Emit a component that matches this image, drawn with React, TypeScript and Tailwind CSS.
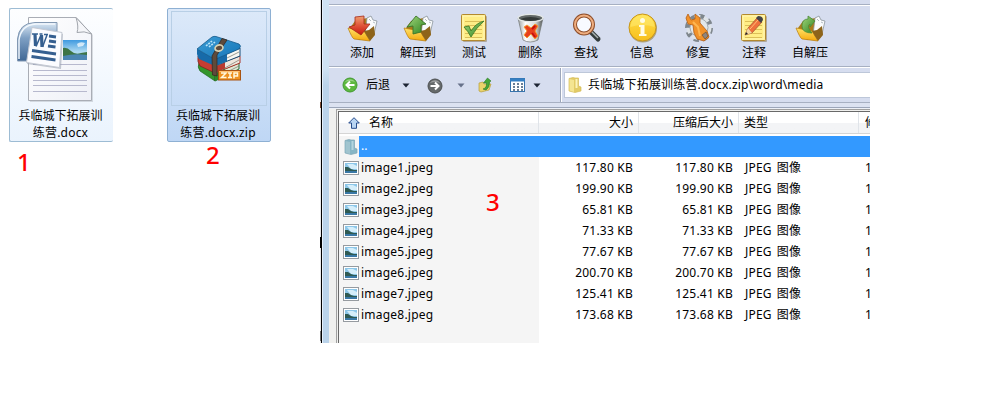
import React from "react";

const FONT = "font-['Noto_Sans','Noto_Sans_CJK_SC',sans-serif]";

const Defs = () => (
  <svg width="0" height="0" className="absolute">
    <defs>
      <linearGradient id="gold" x1="0" y1="0" x2="0" y2="1">
        <stop offset="0" stopColor="#ffe36a" />
        <stop offset="1" stopColor="#f5a80c" />
      </linearGradient>
      <linearGradient id="coin" x1="0" y1="0" x2="0" y2="1">
        <stop offset="0" stopColor="#ffdf4a" />
        <stop offset="1" stopColor="#f7bf1c" />
      </linearGradient>
      <linearGradient id="red" x1="0" y1="0" x2="0" y2="1">
        <stop offset="0" stopColor="#f0a070" />
        <stop offset="0.5" stopColor="#e0553a" />
        <stop offset="1" stopColor="#c8180f" />
      </linearGradient>
      <linearGradient id="green" x1="0" y1="0" x2="1" y2="1">
        <stop offset="0" stopColor="#a4d67c" />
        <stop offset="1" stopColor="#2c8420" />
      </linearGradient>
      <linearGradient id="can" x1="0" y1="0" x2="1" y2="0">
        <stop offset="0" stopColor="#9b9f9f" />
        <stop offset="0.3" stopColor="#ffffff" />
        <stop offset="0.7" stopColor="#d5d8d7" />
        <stop offset="1" stopColor="#4c5150" />
      </linearGradient>
      <linearGradient id="navy" x1="0" y1="0" x2="0" y2="1">
        <stop offset="0" stopColor="#dbe8f4" />
        <stop offset="0.4" stopColor="#7fa0c4" />
        <stop offset="1" stopColor="#3f6795" />
      </linearGradient>
      <linearGradient id="paper" x1="0" y1="0" x2="1" y2="1">
        <stop offset="0" stopColor="#ffffff" />
        <stop offset="1" stopColor="#eef0f7" />
      </linearGradient>
      <linearGradient id="sky" x1="0" y1="0" x2="0" y2="1">
        <stop offset="0" stopColor="#3f9ae0" />
        <stop offset="0.6" stopColor="#b2dcf2" />
        <stop offset="1" stopColor="#7eb4d4" />
      </linearGradient>
      <linearGradient id="book" x1="0" y1="0" x2="1" y2="1">
        <stop offset="0" stopColor="#3a9bd4" />
        <stop offset="1" stopColor="#1676b8" />
      </linearGradient>
    </defs>
  </svg>
);

const WordIcon = () => (
  <svg width="84" height="92" viewBox="0 0 84 92">
    <path d="M15 4H63L78 20V87H15z" fill="#9aa0a8" opacity="0.35" />
    <path d="M13.500 2.500H61L76.500 19V85.500H13.500z" fill="url(#paper)" stroke="#a9adb5" />
    <path d="M61 2.500Q64 12 62 17.500Q69 15.500 76.500 19z" fill="#f5f6f9" stroke="#a1a5ac" />
    <rect x="48" y="25" width="24" height="20" fill="url(#sky)" />
    <path d="M48 33Q52 32 56 36T66 38L72 37V41H48z" fill="#3d7445" />
    <path d="M48 41Q60 38 72 40V45H48z" fill="#4c86b2" />
    <path d="M62 29q3-3 8-1l-2 3-5 1z" fill="#fff" opacity="0.7" />
    <path d="M18 49.500H72M18 55.500H72M18 60.500H72M18 65.500H72M18 70.500H72M18 76.500H72" stroke="#b7b9ce" />
    <path d="M2.500 46V24Q4 8 20 7.500H42V46z" fill="url(#navy)" stroke="#8298b2" />
    <path d="M4 44V25Q6 10 21 9H40" stroke="#f2f8fd" strokeWidth="1.500" fill="none" />
    <path d="M18 14L48 19L46 54L12 49z" fill="#8b96a5" opacity="0.5" />
    <path d="M17 12.500L47 17.500L44.500 52.500L11.500 47.500z" fill="#fbfcff" stroke="#c4c9d3" />
    <path d="M17 19h6M24.500 19h3M29 19.500h4" stroke="#355f90" strokeWidth="1.500" />
    <path d="M20 19L20.500 31M26.500 20L27 32" stroke="#355f90" strokeWidth="3.200" />
    <path d="M21 31.500L26 20M27.500 32L32 20" stroke="#355f90" strokeWidth="1.500" />
    <path d="M34 21l7 1M34 26l7 1M33 31l7.500 1M17 35.500L41 39M16.500 41.500L40.500 45" stroke="#355f90" strokeWidth="2.800" />
  </svg>
);

const BooksIcon = () => (
  <svg width="46" height="48" viewBox="0 0 46 48">
    <path d="M2 28L18 38V46L3 36Q0 32 2 28z" fill="#34962c" stroke="#1c661c" strokeWidth="0.700" />
    <path d="M18 38L42 28V34L18 46z" fill="#dfe8d4" stroke="#2a6a2c" />
    <path d="M1 21L18 30V38L3 31Q0 27 1 21z" fill="#c73d32" stroke="#75201c" strokeWidth="0.700" />
    <path d="M18 30L43 21V28L18 38z" fill="#efe6dc" stroke="#a8342a" />
    <path d="M0 14L18 24V31L2 24Q-1 19 0 14z" fill="#176ba9" />
    <path d="M18 24L43 13V21L18 31z" fill="#f7f8f3" stroke="#174d77" />
    <path d="M26 25L42 17M26 34L42 25M26 39L42 31" stroke="#77756b" strokeWidth="0.700" />
    <path d="M18 24L30 18.500V26L18 31zM18 31.500L28 27V33L18 38z" fill="#176ba9" />
    <path d="M18 31.500L28 27.500V33.500L18 38z" fill="#b93a30" />
    <path d="M18 38.500L28 34V41L18 46z" fill="#2c8a29" />
    <path d="M0 14L15 2Q17 1 19 1.500L42 9Q45 11 42 14L18 24.500z" fill="url(#book)" stroke="#175a8c" strokeWidth="0.800" />
    <path d="M25 3.500L30 5L20 20L20 41L15.500 40L15 21z" fill="#5e4a3b" stroke="#30251e" strokeWidth="0.700" />
    <ellipse cx="22" cy="13" rx="4" ry="3" transform="rotate(-15 22 13)" fill="#5e4a3b" stroke="#d8d2b2" strokeWidth="1.700" />
    <path d="M9 11l6-5M12 12l6-5" stroke="#b9e4f9" strokeWidth="1.600" strokeDasharray="2 1" />
    <rect x="21.500" y="35.500" width="22" height="9.500" fill="#ee9120" stroke="#a75312" />
    <path d="M22.500 36.500H42.500" stroke="#ffc170" />
    <path d="M24 38H29L24.500 42.500H29.500M31 38H35M33 38V42.500M31 42.500H35M37 43.500V38H40.500V41H37" fill="none" stroke="#fff8dd" strokeWidth="1.500" />
  </svg>
);

const FolderBase = () => (
  <>
    <path d="M3 15L8 8L24 4L28 21L12 27z" fill="#a97c1c" />
    <path d="M20 5L24 3L26 7L30 8L27 21L18 22z" fill="#fafbfc" stroke="#8a949b" strokeWidth="0.800" />
    <path d="M22 6l2 2M26 9l2 1" stroke="#b2bcc3" />
    <path d="M1 15L17 18L23 28L7 26Q5 25 1 15z" fill="url(#gold)" stroke="#b87a0a" strokeWidth="0.700" />
    <path d="M17 18L22 17L27 13L28 22L23 28z" fill="#8e641a" />
  </>
);

function ToolIcon({ kind }: { kind: string }) {
  return (
    <svg width="31" height="31" viewBox="0 0 31 31">
      {kind === "add" && (
        <>
          <FolderBase />
          <path d="M8 4L17 3V11H23L14 22L2 14L8 12z" fill="url(#red)" stroke="#a5281a" strokeWidth="0.800" />
        </>
      )}
      {kind === "extract" && (
        <>
          <FolderBase />
          <path d="M13 3L23 11L18 12V19L10 21V13L4 14z" fill="url(#green)" stroke="#3c7529" strokeWidth="0.900" />
        </>
      )}
      {(kind === "test" || kind === "note") && (
        <>
          <rect x="4" y="3" width="24" height="26" rx="1" fill="#88734b" opacity="0.5" />
          <rect x="2.500" y="1.500" width="24" height="26" rx="1" fill="#ffed86" stroke="#b3892e" />
          <rect x="4" y="3" width="21" height="23" fill="none" stroke="#fff8bc" />
          <path d="M6 8.500H23M6 12.500H23M6 16.500H23M6 20.500H23M6 24.500H23" stroke="#dcbf58" />
        </>
      )}
      {kind === "test" && <path d="M5 14L10 13L12 18Q17 10 25 8Q17 15 12 24Q9 18 5 14z" fill="url(#green)" stroke="#32741f" strokeWidth="0.800" />}
      {kind === "note" && (
        <>
          <path d="M6 22L9 15L18 5L23 9L13 20z" fill="#ef713c" stroke="#9c532c" strokeWidth="0.700" />
          <path d="M6 22L9 15L13 20z" fill="#f2d7a2" />
          <path d="M6 22l1-3 2 2z" fill="#222" />
          <path d="M17 5L19 3Q24 3 24 7L22 10z" fill="#424348" />
          <path d="M11 16L19 7" stroke="#ffc074" />
        </>
      )}
      {kind === "delete" && (
        <>
          <path d="M3 5L8 27Q15 31 23 27L28 5z" fill="url(#can)" stroke="#727776" strokeWidth="0.700" />
          <ellipse cx="15.500" cy="5" rx="12.500" ry="3.700" fill="#626866" stroke="#e5e9e8" strokeWidth="1.300" />
          <path d="M5 6q10 4 21 0q-10-4-21 0" fill="#343a38" />
          <path d="M9 14L12 12L16 15L20 11L23 13L20 18L23 23L20 26L16 21L12 25L9 22L12 18z" fill="#e8401c" stroke="#f49b31" />
          <path d="M17 16L20 13M17 20L20 24" stroke="#c80f0f" strokeWidth="2" />
        </>
      )}
      {kind === "find" && (
        <>
          <path d="M19 18L27 26" stroke="#333c3d" strokeWidth="5" strokeLinecap="round" />
          <path d="M19 17L27 25" stroke="#a9b1b2" strokeWidth="1.500" />
          <circle cx="13" cy="11.500" r="9" fill="#f8faff" stroke="#8f4f2b" strokeWidth="4" />
          <circle cx="13" cy="11.500" r="9" fill="none" stroke="#efae80" strokeWidth="2" />
        </>
      )}
      {kind === "info" && (
        <>
          <circle cx="16" cy="15.500" r="14" fill="#9c8951" opacity="0.7" />
          <circle cx="15.500" cy="14.500" r="13.500" fill="url(#coin)" stroke="#c8961b" />
          <path d="M3.500 14a12 12 0 0 1 24 0q-12-4-24 0" fill="#ffed78" opacity="0.5" />
          <circle cx="15.500" cy="7.500" r="2.500" fill="#fffce5" />
          <path d="M12 12H17.500V21H19.500V23H12V21H13.500V14H12z" fill="#fffce5" />
        </>
      )}
      {kind === "repair" && (
        <>
          <circle cx="16" cy="15" r="11.500" fill="none" stroke="#7f878d" strokeWidth="5" strokeDasharray="5 4" />
          <circle cx="16" cy="14.500" r="10.500" fill="none" stroke="#dfe4e8" strokeWidth="4" strokeDasharray="5.500 3.500" />
          <circle cx="16" cy="14.500" r="9" fill="#e2e7ea" stroke="#a3abb0" />
          <path d="M5 1L8 7L12 6L12 1L17 5L17 10L24 18L26 24L21 28L14 26L11 20L10 12L5 11L3 5z" fill="#f29229" stroke="#b35d16" strokeWidth="0.800" />
          <path d="M10 9L15 14L17 23" stroke="#ffb650" strokeWidth="2" fill="none" />
          <path d="M19 22L23 19L25 23L22 26z" fill="#8d8580" stroke="#6f5031" strokeWidth="0.700" />
        </>
      )}
      {kind === "sfx" && (
        <>
          <FolderBase />
          <path d="M17 20Q7 20 7 13Q7 6 13 6V3L20 8L15 14V11Q11 13 17 20z" fill="url(#green)" stroke="#4b8b38" strokeWidth="0.800" />
        </>
      )}
    </svg>
  );
}

const tools = [
  { label: "添加", kind: "add" },
  { label: "解压到", kind: "extract" },
  { label: "测试", kind: "test" },
  { label: "删除", kind: "delete" },
  { label: "查找", kind: "find" },
  { label: "信息", kind: "info" },
  { label: "修复", kind: "repair" },
  { label: "注释", kind: "note" },
  { label: "自解压", kind: "sfx" },
];

const Arrow = ({ color }: { color: string }) => (
  <svg width="8" height="5" viewBox="0 0 8 5">
    <path d="M0.500 0.500H7.500L4 4.500z" fill={color} />
  </svg>
);

const RoundArrow = ({ forward }: { forward?: boolean }) => (
  <svg width="16" height="16" viewBox="0 0 16 16">
    <circle cx="8" cy="8" r="7" fill={forward ? "#65696a" : "#5cb83f"} stroke={forward ? "#4d5051" : "#439a31"} />
    <path d="M3 5a6 6 0 0 1 10 0q-5-2-10 0" fill="#fff" opacity="0.35" />
    {forward ? (
      <path d="M3.500 8H11M8 4.500L11.500 8L8 11.500" stroke="#fff" strokeWidth="2" fill="none" />
    ) : (
      <path d="M12.500 8H5M8 4.500L4.500 8L8 11.500" stroke="#fff" strokeWidth="2" fill="none" />
    )}
  </svg>
);

const Folder = ({ blue }: { blue?: boolean }) => (
  <svg width="14" height="16" viewBox="0 0 14 16">
    <path d="M1 1.500L5 0.500L7 1H10.500V9L13 10V14L7 15.500L1 14z" fill={blue ? "#86b5c5" : "#e3cc66"} stroke={blue ? "#7fa6b4" : "#d4bb5b"} strokeWidth="0.700" />
    <path d="M1.500 2L6 3V15L1.500 13.500z" fill={blue ? "#a0c4cf" : "#f4e591"} />
    <path d="M8.500 2V11" stroke={blue ? "#b4d5de" : "#fbf3b8"} strokeWidth="2" />
  </svg>
);

const ImageIcon = () => (
  <svg width="16" height="14" viewBox="0 0 16 14">
    <rect x="0.500" y="0.500" width="15" height="13" fill="#fff" stroke="#969ba0" />
    <rect x="2" y="2" width="12" height="10" fill="#8cc6e8" />
    <path d="M4 3h6l4 2v3H8z" fill="#d5eefa" />
    <path d="M2 6l3 0 3 2 3 1h3v1H2z" fill="#2f5a52" />
    <path d="M2 10H14V12H2z" fill="#3978a6" />
  </svg>
);

const files = [
  { name: "image1.jpeg", size: "117.80 KB" },
  { name: "image2.jpeg", size: "199.90 KB" },
  { name: "image3.jpeg", size: "65.81 KB" },
  { name: "image4.jpeg", size: "71.33 KB" },
  { name: "image5.jpeg", size: "77.67 KB" },
  { name: "image6.jpeg", size: "200.70 KB" },
  { name: "image7.jpeg", size: "125.41 KB" },
  { name: "image8.jpeg", size: "173.68 KB" },
];

function DesktopFile({ zip }: { zip?: boolean }) {
  return (
    <div
      className={
        zip
          ? "flex h-[134px] w-[104px] shrink-0 flex-col items-center rounded-[2px] border border-[#8eb0d3] bg-linear-to-b from-[#dce9f9] to-[#bfd7f5] p-[2px]"
          : "flex h-[134px] w-[104px] shrink-0 flex-col items-center rounded-[2px] border border-r-0 border-[#9dbcd4] bg-linear-to-b from-[#fdfeff] to-[#eaf3fd] p-[2px]"
      }
    >
      <div
        className={
          zip
            ? "flex h-[95px] w-[96px] shrink-0 items-center justify-center border border-[#b8cfe6] pl-[1px]"
            : "flex h-[95px] w-[96px] shrink-0 items-center pt-1 pl-[1px]"
        }
      >
        {zip ? <BooksIcon /> : <WordIcon />}
      </div>
      <div className="mt-[1px] pr-[2px] text-center text-[12px] leading-[17px] whitespace-nowrap text-black">
        <div>兵临城下拓展训</div>
        <div className="tracking-[0.2px]">{zip ? "练营.docx.zip" : "练营.docx"}</div>
      </div>
    </div>
  );
}

export default function App() {
  return (
    <main className={`relative flex h-[400px] w-[1000px] overflow-hidden bg-white text-[12px] text-black ${FONT}`}>
      <Defs />
      <div className="flex w-[320px] shrink-0 gap-[54px] pt-2 pl-[9px]">
        <DesktopFile />
        <DesktopFile zip />
      </div>

      <section className="flex h-[343px] w-[550px] shrink-0 overflow-hidden">
        <div className="flex h-full w-px shrink-0 flex-col bg-[#e8e8ea]">
          <div className="mt-[102px] h-[6px] bg-[#7a4a30]" />
          <div className="mt-[129px] h-[11px] bg-black" />
          <div className="mt-[83px] h-[10px] bg-[#777777]" />
        </div>
        <div className="h-full w-px shrink-0 bg-black" />
        <div className="h-full w-[7px] shrink-0 border-l border-[#e4effa] bg-linear-to-b from-[#cfe2f3] from-20% to-[#bad3ea] to-25%" />
        <div className="flex w-[541px] shrink-0 flex-col bg-[#d6ddef]">
          <div className="h-[5px] shrink-0 border-b border-[#a7b0c2] bg-[#d6ddef]" />
          <div className="flex h-[62px] shrink-0 border-t border-b border-t-white border-b-[#a7b0c2] pl-[5px]">
            {tools.map((t) => (
              <div key={t.kind} className="flex w-14 shrink-0 flex-col items-center pt-[7px]">
                <ToolIcon kind={t.kind} />
                <span className="mt-[1px] leading-[16px] whitespace-nowrap">{t.label}</span>
              </div>
            ))}
          </div>

          <div className="flex h-9 shrink-0 items-center border-t border-b border-t-white border-b-[#a7b0c2]">
            <div className="flex h-full w-[231px] shrink-0 items-center pl-[13px]">
              <RoundArrow />
              <span className="ml-2 w-6">后退</span>
              <span className="ml-[12px]"><Arrow color="#1c2433" /></span>
              <span className="ml-[17px] pt-[2px]"><RoundArrow forward /></span>
              <span className="ml-[14px]"><Arrow color="#66718a" /></span>
              <svg className="ml-[13px]" width="15" height="16" viewBox="0 0 15 16">
                <path d="M1 6L5 5L6 7L13 7L11 13L3 15L1 14z" fill="#ead36b" stroke="#b89e39" strokeWidth="0.700" />
                <path d="M5 12Q9 11 8.500 6H5.500L9.500 1L13 4L11.500 5Q12 10 8 13z" fill="#46a638" stroke="#287821" strokeWidth="0.600" />
              </svg>
              <svg className="ml-[17px]" width="15" height="14" viewBox="0 0 15 14">
                <rect x="0.500" y="0.500" width="14" height="13" fill="#fff" stroke="#3774ae" />
                <path d="M0 2H15" stroke="#357fc3" strokeWidth="3" />
                <path d="M3 6h2M7 6h2M11 6h2M3 9h2M7 9h2M11 9h2M3 12h2M7 12h2M11 12h2" stroke="#3a5472" strokeWidth="1.500" />
              </svg>
              <span className="ml-2"><Arrow color="#1c2433" /></span>
            </div>
            <div className="flex h-full w-[310px] shrink-0 items-center border-l border-[#9ca6ba] shadow-[inset_1px_0_0_#ffffff] pl-[3px]">
              <div className="flex h-[26px] flex-1 items-center border border-r-0 border-[#bdc7d9] bg-white pl-[3px]">
                <Folder />
                <span className="ml-[6px] tracking-[0.18px] whitespace-nowrap">兵临城下拓展训练营.docx.zip\word\media</span>
              </div>
            </div>
          </div>
          <div className="h-[5px] shrink-0 border-b border-[#9ca6ba] bg-[#dce2f1]" />
          <div className="h-px shrink-0 bg-[#edf0f7]" />

          <div className="flex h-[234px] shrink-0 bg-[#f0f0ee] pl-[7px]">
            <div className="flex w-[534px] shrink-0 border-t border-l border-[#a0a0a0] pt-px pl-px">
              <div className="flex w-[532px] shrink-0 flex-col border-t border-l border-[#696969] bg-white">
                <div className="flex h-[22px] shrink-0 border-b border-[#d5d5d5] bg-linear-to-b from-white from-50% to-[#f3f4f6] to-50% leading-[22px]">
                  <div className="flex w-[200px] shrink-0 items-center border-r border-[#e0e4e9] pl-[9px]">
                    <svg width="12" height="12" viewBox="0 0 12 12">
                      <path d="M6 0.700L11.300 6H8.500V11.300H3.500V6H0.700z" fill="#b9d5f3" stroke="#274c8c" />
                    </svg>
                    <span className="ml-[9px]">名称</span>
                  </div>
                  <div className="w-[100px] shrink-0 border-r border-[#e0e4e9] pr-[5px] text-right">大小</div>
                  <div className="w-[100px] shrink-0 border-r border-[#e0e4e9] pr-[5px] text-right">压缩后大小</div>
                  <div className="w-[120px] shrink-0 border-r border-[#e0e4e9] pl-[5px]">类型</div>
                  <div className="w-[11px] shrink-0 overflow-hidden pl-[6px] whitespace-nowrap">修</div>
                </div>
                <div className="flex h-[23px] shrink-0 items-center pt-[2px]">
                  <div className="flex h-full w-5 shrink-0 items-center bg-[#f5f5f5] pl-[5px]">
                    <Folder blue />
                  </div>
                  <div className="h-full flex-1 bg-[#3399ff] pl-[2px] leading-[20px] text-white">..</div>
                </div>
                {files.map((f) => (
                  <div key={f.name} className="flex h-[21px] shrink-0 items-center leading-[21px] tracking-[0.22px] whitespace-nowrap">
                    <div className="flex h-full w-[200px] shrink-0 items-center bg-[#f5f5f5] pl-1">
                      <ImageIcon />
                      <span className="ml-[2px]">{f.name}</span>
                    </div>
                    <div className="w-[100px] shrink-0 pr-[6px] text-right">{f.size}</div>
                    <div className="w-[100px] shrink-0 pr-[6px] text-right">{f.size}</div>
                    <div className="w-[120px] shrink-0 pl-[6px] [word-spacing:1.500px]">JPEG 图像</div>
                    <div className="w-[11px] shrink-0 overflow-hidden pl-[6px]">1</div>
                  </div>
                ))}
                <div className="w-[200px] flex-1 bg-[#f5f5f5]" />
              </div>
            </div>
          </div>
        </div>
      </section>

      <span className="absolute top-[146px] left-[17px] text-[24px] leading-[32px] font-medium text-[#ff0000]">1</span>
      <span className="absolute top-[139px] left-[206px] text-[24px] leading-[32px] font-medium text-[#ff0000]">2</span>
      <span className="absolute top-[186px] left-[486px] text-[24px] leading-[32px] font-medium text-[#ff0000]">3</span>
    </main>
  );
}
